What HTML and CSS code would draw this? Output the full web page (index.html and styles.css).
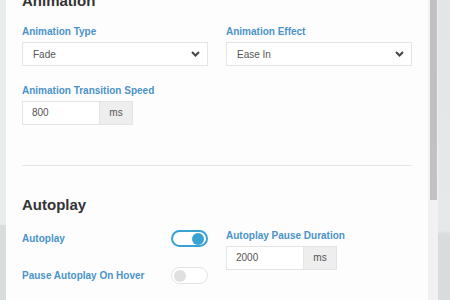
FILE: index.html
```html
<!DOCTYPE html>
<html>
<head>
    <title>Slider Settings</title>
    <link rel="stylesheet" href="styles.css">
</head>
<body>
    <div class="edge"></div>

    <div class="panel">
        <h2 class="section-title first">Animation</h2>

        <div class="row">
            <div class="field">
                <label class="field-label">Animation Type</label>
                <div class="select">
                    <span>Fade</span>
                    <svg class="chevron" width="9" height="6" viewBox="0 0 9 6"><path d="M1 1l3.5 3.5L8 1" fill="none" stroke="#444" stroke-width="2"/></svg>
                </div>
            </div>
            <div class="field">
                <label class="field-label">Animation Effect</label>
                <div class="select">
                    <span>Ease In</span>
                    <svg class="chevron" width="9" height="6" viewBox="0 0 9 6"><path d="M1 1l3.5 3.5L8 1" fill="none" stroke="#444" stroke-width="2"/></svg>
                </div>
            </div>
        </div>

        <div class="row second">
            <div class="field">
                <label class="field-label">Animation Transition Speed</label>
                <div class="input-group">
                    <span class="input">800</span>
                    <span class="addon">ms</span>
                </div>
            </div>
        </div>

        <hr class="divider">

        <h2 class="section-title">Autoplay</h2>

        <div class="row autoplay">
            <div class="toggles">
                <div class="toggle-row">
                    <span class="field-label">Autoplay</span>
                    <span class="switch on"><span class="knob"></span></span>
                </div>
                <div class="toggle-row">
                    <span class="field-label">Pause Autoplay On Hover</span>
                    <span class="switch"><span class="knob"></span></span>
                </div>
            </div>
            <div class="field">
                <label class="field-label">Autoplay Pause Duration</label>
                <div class="input-group">
                    <span class="input">2000</span>
                    <span class="addon">ms</span>
                </div>
            </div>
        </div>
    </div>

    <div class="scrollbar"><div class="thumb"></div></div>
    <div class="backdrop"></div>
</body>
</html>
```

FILE: styles.css
```css
* {
    box-sizing: border-box;
    margin: 0px;
}

html, body {
    height: 100%;
    overflow: hidden;
}

body {
    display: flex;
    font-family: "Liberation Sans", Arial, sans-serif;
    background: #e4e7e7;
}

.edge {
    width: 6px;
    background: linear-gradient(#eaeded 0, #eaeded 225px, #dadddd 225px);
}

.panel {
    width: 422px;
    background: #fdfdfd;
    padding: 0 16px;
}

.section-title {
    font-size: 15px;
    line-height: 20px;
    font-weight: bold;
    color: #333;
}

.section-title.first {
    margin-top: -9px;
}

.row {
    display: grid;
    grid-template-columns: 186px 186px;
    column-gap: 18px;
    margin-top: 14px;
}

.row.second {
    margin-top: 18px;
}

.field-label {
    display: block;
    font-size: 10px;
    line-height: 14px;
    font-weight: bold;
    color: #4a93c9;
    margin-bottom: 3px;
}

.select {
    height: 24px;
    border: 1px solid #e4e4e4;
    background: #fff;
    display: flex;
    align-items: center;
    justify-content: space-between;
    padding: 0 7px 0 10px;
    font-size: 10px;
    color: #555;
}

.input-group {
    display: flex;
    width: 111px;
    height: 24px;
    border: 1px solid #e4e4e4;
    font-size: 10px;
    color: #555;
}

.input {
    width: 76px;
    background: #fff;
    padding-left: 9px;
    line-height: 22px;
}

.addon {
    flex: 1;
    background: #eeeeee;
    border-left: 1px solid #e4e4e4;
    text-align: center;
    line-height: 22px;
}

.divider {
    border: none;
    border-top: 1px solid #e6e6e6;
    margin: 40px 0 29px;
}

.row.autoplay {
    margin-top: 14px;
}

.toggles {
    display: flex;
    flex-direction: column;
    gap: 20px;
    padding-top: 1px;
}

.toggle-row {
    display: flex;
    justify-content: space-between;
    align-items: center;
    height: 17px;
}

.toggle-row .field-label {
    margin-bottom: 0;
}

.switch {
    width: 37px;
    height: 17px;
    border-radius: 9px;
    border: 1.5px solid #e3e3e3;
    background: #fff;
    display: flex;
    align-items: center;
    padding: 0 2px;
}

.switch .knob {
    width: 12px;
    height: 12px;
    border-radius: 50%;
    background: #e0e0e0;
}

.switch.on {
    border: 2px solid #38a2d2;
    justify-content: flex-end;
}

.switch.on .knob {
    background: #38a2d2;
}

.scrollbar {
    width: 10px;
    background: #f1f1f1;
    padding: 0 1px 0 2px;
}

.thumb {
    height: 200px;
    background: #c1c1c1;
}

.backdrop {
    flex: 1;
    background: linear-gradient(#e3e6e6 0, #e6e9e9 230px, #d9dcdc 235px);
}
```
